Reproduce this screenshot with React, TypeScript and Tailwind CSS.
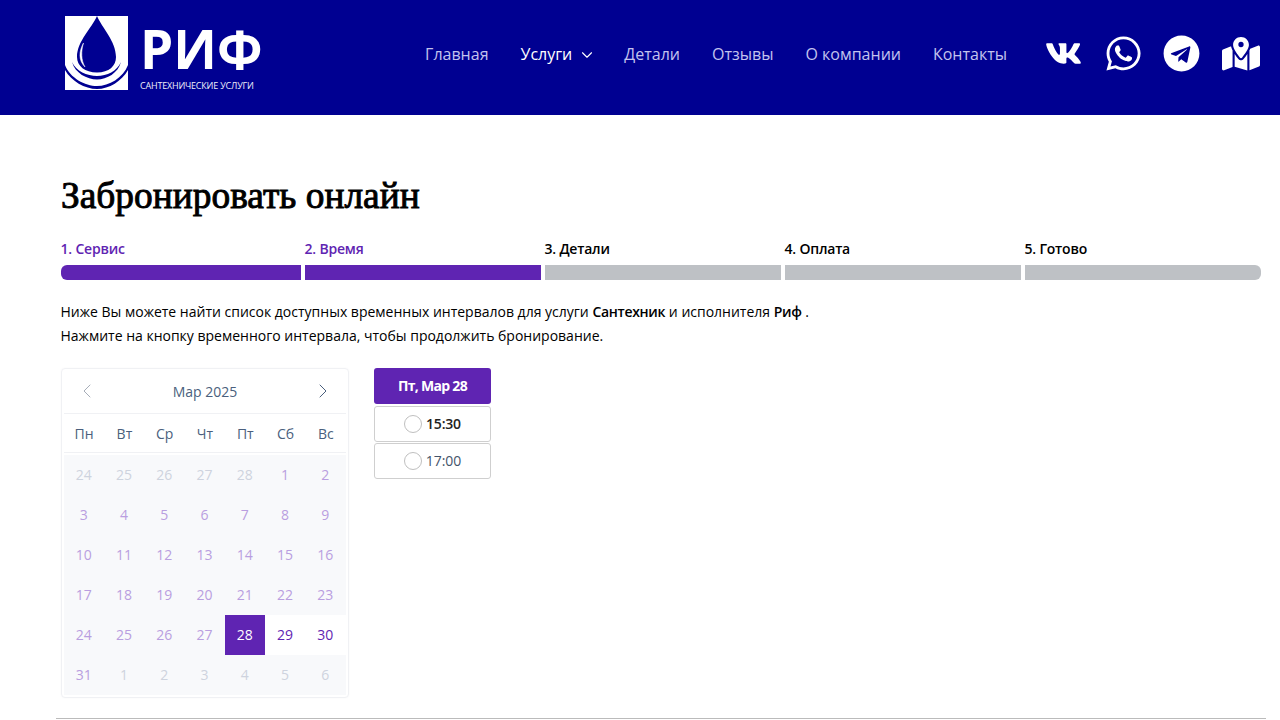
import React from "react";
import { FaVk, FaWhatsapp, FaTelegram } from "react-icons/fa";
import { FaMapLocationDot } from "react-icons/fa6";
import { ChevronDown, ChevronLeft, ChevronRight } from "lucide-react";

const navItems = ["Главная", "Услуги", "Детали", "Отзывы", "О компании", "Контакты"];
const steps = [
  { label: "1. Сервис", done: true },
  { label: "2. Время", done: true },
  { label: "3. Детали", done: false },
  { label: "4. Оплата", done: false },
  { label: "5. Готово", done: false },
];
const weekDays = ["Пн", "Вт", "Ср", "Чт", "Пт", "Сб", "Вс"];

// muted = other month, past = this month but not bookable
const days: { n: number; kind: "muted" | "past" | "selected" | "open" }[] = [
  ...[24, 25, 26, 27, 28].map((n) => ({ n, kind: "muted" as const })),
  ...Array.from({ length: 27 }, (_, i) => ({ n: i + 1, kind: "past" as const })),
  { n: 28, kind: "selected" as const },
  { n: 29, kind: "open" as const },
  { n: 30, kind: "open" as const },
  { n: 31, kind: "past" as const },
  ...[1, 2, 3, 4, 5, 6].map((n) => ({ n, kind: "muted" as const })),
];

function Logo() {
  return (
    <div className="flex h-[115px] w-[212px] shrink-0 items-start">
      <svg viewBox="0 0 63 74" className="mt-[16px] h-[74px] w-[63px] shrink-0">
        <path d="M0 0H63V74H0Z" fill="#fff" />
        <path
          d="M32 0C27 12 12 25 12 41C12 50 20 56.500 32 56.500C44 56.500 51 50 51 41C51 25 37 12 32 0Z"
          fill="#000091"
        />
        <path d="M18.500 27C14 35 13 44 20 51C16 44 16 35 18.500 27Z" fill="#fff" stroke="#fff" strokeWidth="0.5" />
        <path
          d="M7 46C10 57 22 63.500 32 63.500C42 63.500 53 57 56 46C52 55 42 60 32 60C22 60 11 55 7 46Z"
          fill="#000091"
        />
        <path
          d="M0 49C5 62 20 70 32 70C44 70 58 62 63 49V54C57 65 44 73 32 73C20 73 6 65 0 54Z"
          fill="#000091"
        />
      </svg>
      <div className="ml-[12px] flex flex-col">
        <div className="mt-[29px] h-[40px] text-[53px] leading-[40px] font-bold text-white">РИФ</div>
        <div className="mt-[10px] text-[9px] leading-[13px] tracking-[-0.2px] whitespace-nowrap text-[#eeeefa]">
          САНТЕХНИЧЕСКИЕ УСЛУГИ
        </div>
      </div>
    </div>
  );
}

function Calendar() {
  return (
    <div className="h-[330px] w-[288px] shrink-0 rounded border border-[#f0f1f4] px-[2px] shadow-[0_0_2px_rgba(0,0,0,0.04)]">
      <div className="flex h-[45px] items-center justify-between border-b border-[#f0f1f4] px-[11px] text-[14px] text-[#4a5f7d]">
        <ChevronLeft size={24} strokeWidth={1} className="text-[#a6adb8]" />
        <span>Мар 2025</span>
        <ChevronRight size={24} strokeWidth={1} className="text-[#4a5f7d]" />
      </div>
      <div className="grid h-[39px] grid-cols-7 items-center border-b border-[#f0f1f4] text-center text-[14px] text-[#4a5f7d]">
        {weekDays.map((d) => (
          <div key={d}>{d}</div>
        ))}
      </div>
      <div className="mt-[2px] grid grid-cols-7 bg-[#f8f9fb] text-center text-[14px]">
        {days.map((d, i) => (
          <div
            key={i}
            className={
              "flex h-[40px] items-center justify-center pr-[1px] pb-[2px] " +
              (d.kind === "muted"
                ? "text-[#ced3de]"
                : d.kind === "past"
                  ? "text-[#b99ee0]"
                  : d.kind === "selected"
                    ? "bg-[#5f24b2] text-white"
                    : "bg-white text-[#5f24b2]")
            }
          >
            {d.n}
          </div>
        ))}
      </div>
    </div>
  );
}

function Slot({ time, dark }: { time: string; dark?: boolean }) {
  return (
    <div className="flex h-[36px] items-center justify-center gap-[5px] rounded-[3px] border border-[#cfcfcf] bg-white">
      <span className="h-[18px] w-[18px] rounded-full border border-[#bfbfbf]" />
      <span
        className={
          "-mt-[1px] -ml-[1px] text-[14px] " + (dark ? "font-semibold tracking-[-0.2px] text-[#222]" : "text-[#44546a]")
        }
      >
        {time}
      </span>
    </div>
  );
}

export default function App() {
  return (
    <div className="h-[720px] overflow-hidden bg-white font-['Open_Sans',sans-serif]">
      <header className="flex h-[115px] items-center justify-between bg-[#000091] pr-[20px] pl-[65px]">
        <Logo />
        <div className="flex items-center pb-[8px]">
          <nav className="flex items-center gap-[32px] text-[16px] text-[#c3c3ee]">
            {navItems.map((item) =>
              item === "Услуги" ? (
                <span key={item} className="flex items-center gap-[6px] text-white">
                  {item}
                  <ChevronDown size={18} strokeWidth={1.5} className="mt-[2px] -mr-[4px]" />
                </span>
              ) : (
                <span key={item}>{item}</span>
              ),
            )}
          </nav>
          <div className="ml-[38px] flex items-center gap-[23px] text-white">
            <FaVk size={37} className="-mr-[1px]" />
            <FaWhatsapp size={39} className="-mr-[5px]" />
            <FaTelegram size={37} className="-mr-[1px] ml-[2px]" />
            <FaMapLocationDot size={38} />
          </div>
        </div>
      </header>

      <main className="w-[1261px] pt-[60px] pl-[61px]">
        <h1 className="font-['Liberation_Serif',serif] text-[37.400px] leading-[42px] font-normal text-black [-webkit-text-stroke:0.9px_black]">
          Забронировать онлайн
        </h1>

        <div className="mt-[22px] flex gap-[4px]">
          {steps.map((s, i) => (
            <div key={s.label} className={i === 0 ? "w-[240px]" : "w-[236px]"}>
              <div
                className={
                  "-ml-[0.5px] text-[14px] leading-[20px] font-semibold tracking-[-0.2px] " +
                  (s.done ? "text-[#5f24b2]" : "text-black")
                }
              >
                {s.label}
              </div>
              <div
                className={
                  "mt-[6px] h-[15px] " +
                  (s.done ? "bg-[#5f24b2] " : "bg-[#bec1c5] ") +
                  (i === 0 ? "rounded-l-md" : i === 4 ? "rounded-r-md" : "")
                }
              />
            </div>
          ))}
        </div>

        <div className="mt-[20px] -ml-[0.5px] text-[14px] leading-[24px] text-black">
          <p>
            Ниже Вы можете найти список доступных временных интервалов для услуги{" "}
            <b className="font-semibold tracking-[-0.3px]">Сантехник</b> и исполнителя{" "}
            <b className="font-semibold tracking-[-0.3px]">Риф</b> .
          </p>
          <p>Нажмите на кнопку временного интервала, чтобы продолжить бронирование.</p>
        </div>

        <div className="mt-[20px] flex items-start gap-[25px]">
          <Calendar />
          <div className="flex w-[117px] flex-col gap-[1px]">
            <div className="mb-[1px] flex h-[36px] items-center justify-center rounded-[3px] bg-[#5f24b2] pb-[1px] text-[14px] font-bold tracking-[-0.7px] text-white">
              Пт, Мар 28
            </div>
            <Slot time="15:30" dark />
            <Slot time="17:00" />
          </div>
        </div>
      </main>
      <div className="mt-[20px] ml-[56px] h-px w-[1210px] bg-[#bbbbbb]" />
    </div>
  );
}
